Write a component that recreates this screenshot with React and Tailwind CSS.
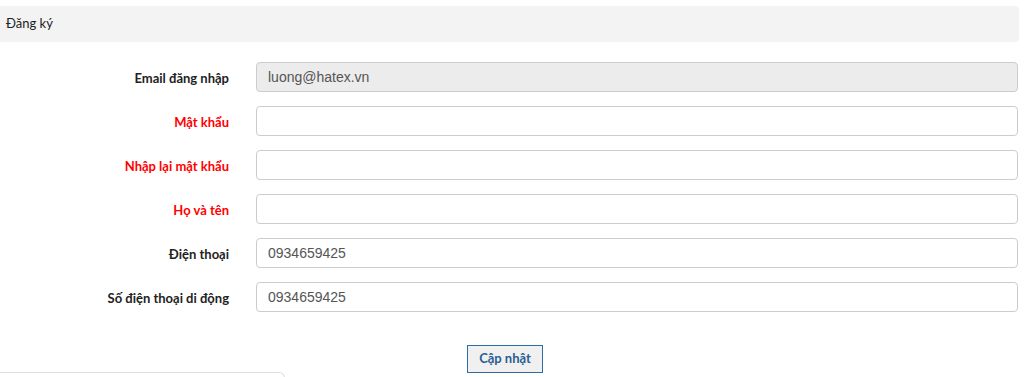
const fields = [
  { label: 'Email đăng nhập', value: 'luong@hatex.vn', disabled: true },
  { label: 'Mật khẩu', value: '', required: true },
  { label: 'Nhập lại mật khẩu', value: '', required: true },
  { label: 'Họ và tên', value: '', required: true },
  { label: 'Điện thoại', value: '0934659425' },
  { label: 'Số điện thoại di động', value: '0934659425' },
];

export default function App() {
  return (
    <div className="w-[1027px] h-[377px] overflow-hidden bg-white" style={{ fontFamily: 'Lato, "Noto Sans", sans-serif' }}>
      <div className="mt-[6px] w-[1019px] h-[36px] bg-[#f3f3f3] rounded-r-[4px] flex items-center pl-[6px] text-[13px] text-[#222]">
        Đăng ký
      </div>
      <div className="mt-[20px] flex flex-col gap-[14px]">
        {fields.map((f) => (
          <div key={f.label} className="flex items-center h-[30px]">
            <label
              className={
                'w-[229px] pt-[3px] text-right text-[13px] font-bold ' +
                (f.required ? 'text-[#ff0000]' : 'text-[#222]')
              }
            >
              {f.label}
            </label>
            <input
              readOnly
              value={f.value}
              className={
                'ml-[27px] w-[762px] h-[30px] rounded-[4px] border border-[#ccc] px-[11px] text-[14px] text-[#555] outline-none ' +
                (f.disabled ? 'bg-[#ececec]' : 'bg-white')
              }
              style={{ fontFamily: '"Liberation Sans", Arial, sans-serif' }}
            />
          </div>
        ))}
      </div>
      <div className="mt-[33px] flex">
        <button className="ml-[467px] w-[76px] h-[28px] border-[1.5px] border-[#2e6da4] bg-[#f0f0f0] text-[13px] font-bold text-[#2a5d94]">
          Cập nhật
        </button>
      </div>
      <div className="-mt-[1px] w-[285px] h-[20px] border border-[#ddd] rounded-tr-[6px] border-l-0"></div>
    </div>
  );
}
